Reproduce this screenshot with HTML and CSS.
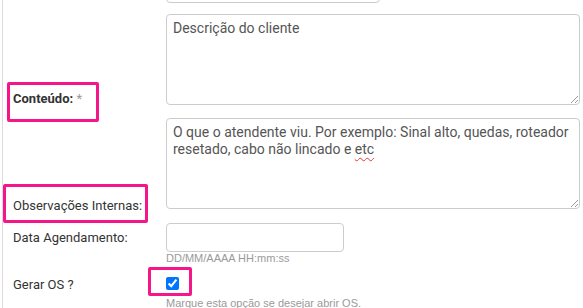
FILE: index.html
```html
<!DOCTYPE html>
<html lang="pt-BR">
<head>
<meta charset="utf-8">
<title>Formulário</title>
<link rel="stylesheet" href="styles.css">
</head>
<body>
<div class="page">
  <div class="panel">
    <div class="row row-top">
      <div class="label"></div>
      <div class="control"><div class="input input-top"></div></div>
    </div>
    <div class="row row-content">
      <label class="label label-content"><b>Conteúdo:</b> <span class="req">*</span></label>
      <div class="control"><div class="textarea">Descrição do cliente</div></div>
    </div>
    <div class="row row-obs">
      <label class="label label-obs">Observações Internas:</label>
      <div class="control"><div class="textarea">O que o atendente viu. Por exemplo: Sinal alto, quedas, roteador resetado, cabo não lincado e <span class="spell">etc</span></div></div>
    </div>
    <div class="row row-date">
      <label class="label label-date">Data Agendamento:</label>
      <div class="control">
        <div class="input input-date"></div>
        <p class="help help-date">DD/MM/AAAA HH:mm:ss</p>
      </div>
    </div>
    <div class="row row-os">
      <label class="label label-os">Gerar OS ?</label>
      <div class="control">
        <input class="check" type="checkbox" checked>
        <p class="help help-os">Marque esta opção se desejar abrir OS.</p>
      </div>
    </div>
  </div>
  <div class="mark mark-1"></div>
  <div class="mark mark-2"></div>
  <div class="mark mark-3"></div>
</div>
</body>
</html>
```

FILE: styles.css
```css
html, body {
  margin: 0;
  padding: 0;
  background: #fff;
}
body {
  font-family: Roboto, "Noto Sans", sans-serif;
  font-size: 14px;
  color: #333;
}
.page {
  position: relative;
  width: 583px;
  height: 308px;
  overflow: hidden;
}
.panel {
  margin-left: 2px;
  border-left: 1px solid #dcdcdc;
  padding-left: 10px;
  min-height: 340px;
}
.row {
  display: grid;
  grid-template-columns: 153px 414px;
}
.row-top { margin-top: -26px; }
.row-content { margin-top: 11px; }
.row-obs { margin-top: 13px; }
.row-date { margin-top: 14px; }
.row-os { margin-top: 10px; }

.label {
  font-size: 13px;
  line-height: 20px;
  color: #333;
}
.label-content { align-self: end; margin-bottom: -4px; }
.label-content b { font-weight: 700; }
.req { color: #999; }
.label-obs { align-self: end; margin-bottom: -7px; }
.label-date { align-self: start; margin-top: 5px; }
.label-os { align-self: start; margin-top: 0; }

.input {
  box-sizing: border-box;
  height: 29px;
  border: 1px solid #ccc;
  border-radius: 4px;
  background: #fff;
}
.input-top { width: 214px; }
.input-date { width: 178px; }

.textarea {
  position: relative;
  box-sizing: border-box;
  height: 91px;
  border: 1px solid #ccc;
  border-radius: 4px;
  padding: 5px 6px;
  color: #555;
  line-height: 17px;
}
.textarea::after {
  content: "";
  position: absolute;
  right: 1px;
  bottom: 1px;
  width: 7px;
  height: 7px;
  background: linear-gradient(135deg, transparent 0 48%, #9a9a9a 48% 56%, transparent 56% 72%, #9a9a9a 72% 80%, transparent 80%);
}
.spell {
  text-decoration: underline wavy #e53935;
  text-decoration-thickness: 1px;
  text-underline-offset: 3px;
}

.help {
  margin: 0;
  font-family: "Liberation Sans", Arial, sans-serif;
  font-size: 11px;
  line-height: 13px;
  color: #9a9a9a;
}
.help-date { margin-top: 0; }
.check {
  display: block;
  width: 13px;
  height: 13px;
  margin: 2px 0 0 0;
  accent-color: #0075ff;
}
.help-os { margin-top: 7px; }

.mark {
  position: absolute;
  box-sizing: border-box;
  border: 3px solid #f5168a;
  border-radius: 2px;
}
.mark-1 { left: 7px; top: 82px; width: 92px; height: 40px; }
.mark-2 { left: 3px; top: 184px; width: 145px; height: 39px; }
.mark-3 { left: 148px; top: 267px; width: 44px; height: 29px; }
```
